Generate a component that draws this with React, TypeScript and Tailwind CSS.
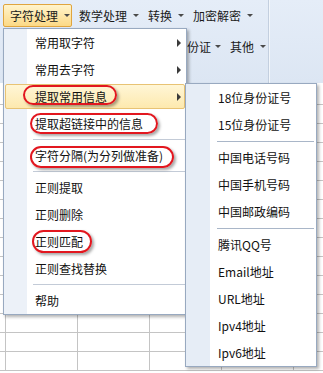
import React from 'react';

const font = "font-['Noto_Sans_CJK_SC',sans-serif]";

function DownArrow() {
  return <span className="w-0 h-0 border-x-[3px] border-x-transparent border-t-[3px] border-t-[#4a4a4a]" />;
}

function RightArrow() {
  return <span className="w-0 h-0 border-y-[4px] border-y-transparent border-l-[4px] border-l-[#3a3a3a]" />;
}

function Tab({ label, active, gap }: { label: string; active?: boolean; gap?: string }) {
  return (
    <div
      className={
        active
          ? 'h-[23px] shrink-0 whitespace-nowrap flex items-center gap-[6px] pl-[6px] pr-[1px] border border-[#e0a53e] rounded-[2px] bg-gradient-to-b from-[#fff4cc] to-[#fcd985]'
          : `h-[23px] shrink-0 whitespace-nowrap flex items-center ${gap ?? 'gap-[6px]'} pl-[7px] pr-[2px]`
      }
    >
      <span className="text-[12px] leading-none text-[#1a1a1a]">{label}</span>
      <DownArrow />
    </div>
  );
}

interface MenuItem {
  label?: string;
  arrow?: boolean;
  hot?: boolean;
  mark?: string;
  sep?: boolean;
}

const mainItems: MenuItem[] = [
  { label: '常用取字符', arrow: true },
  { label: '常用去字符', arrow: true },
  { label: '提取常用信息', arrow: true, hot: true, mark: 'left-[19px] top-[2px] w-[94px] h-[20px]' },
  { label: '提取超链接中的信息', mark: 'left-[26px] top-[3px] w-[128px] h-[21px]' },
  { sep: true },
  { label: '字符分隔(为分列做准备)', mark: 'left-[26px] top-[4px] w-[144px] h-[22px]' },
  { sep: true },
  { label: '正则提取' },
  { label: '正则删除' },
  { label: '正则匹配', mark: 'left-[28px] top-[2px] w-[60px] h-[23px]' },
  { label: '正则查找替换' },
  { sep: true },
  { label: '帮助' },
];

const subItems: MenuItem[] = [
  { label: '18位身份证号' },
  { label: '15位身份证号' },
  { sep: true },
  { label: '中国电话号码' },
  { label: '中国手机号码' },
  { label: '中国邮政编码' },
  { sep: true },
  { label: '腾讯QQ号' },
  { label: 'Email地址' },
  { label: 'URL地址' },
  { label: 'Ipv4地址' },
  { label: 'Ipv6地址' },
];

function GridRow() {
  return (
    <div className="h-[19px] flex shrink-0">
      <div className="w-[6px] border-r border-b border-[#c4c4c4]" />
      <div className="w-[72px] border-r border-b border-[#c4c4c4]" />
      <div className="w-[72px] border-r border-b border-[#c4c4c4]" />
      <div className="w-[72px] border-r border-b border-[#c4c4c4]" />
      <div className="w-[72px] border-r border-b border-[#c4c4c4]" />
      <div className="flex-1 border-b border-[#c4c4c4]" />
    </div>
  );
}

export default function App() {
  return (
    <div className={`relative w-[323px] h-[373px] overflow-hidden bg-white ${font}`}>
      {/* ribbon */}
      <div className="h-[83px] flex bg-gradient-to-b from-[#e5edf8] to-[#dce6f3]">
        <div className="w-[268px] shrink-0 flex flex-col">
          <div className="flex pt-[4px] pl-[3px]">
            <Tab label="字符处理" active />
            <Tab label="数学处理" />
            <Tab label="转换" />
            <Tab label="加密解密" />
          </div>
          <div className="flex items-center h-[23px] mt-[8px] pl-[168px]">
            <Tab label="身份证" gap="gap-[4px]" />
            <Tab label="其他" />
          </div>
        </div>
        <div className="w-[2px] shrink-0 border-l border-[#c3cfdf] bg-[#f2f6fb]" />
        <div className="flex-1" />
      </div>

      {/* sheet */}
      <div className="mt-[3px] flex flex-col">
        {Array.from({ length: 15 }).map((_, i) => (
          <GridRow key={i} />
        ))}
      </div>

      {/* main drop-down */}
      <div className="absolute left-[3px] top-[28px] w-[184px] border border-[#98a9c0] shadow-[2px_2px_3px_rgba(0,0,0,0.3)] bg-[linear-gradient(to_right,#ecf1f8_23px,#ffffff_23px)]">
        {mainItems.map((it, i) =>
          it.sep ? (
            <div key={i} className="h-[5px] flex items-center pl-[29px]">
              <div className="flex-1 h-px bg-[#c3cbd7]" />
            </div>
          ) : (
            <div key={i} className="relative h-[27px] flex items-center justify-between pl-[31px] pr-[5px]">
              {it.hot && (
                <div className="absolute inset-[1px] rounded-[2px] border border-[#e8c374] bg-gradient-to-b from-[#fff6d6] to-[#fde9ae]" />
              )}
              {it.mark && (
                <div
                  className={`absolute ${it.mark} rounded-full border-2 border-[#e2171f] shadow-[2px_2px_3px_rgba(0,0,0,0.35)]`}
                />
              )}
              <span className="relative text-[12px] leading-none text-[#111]">{it.label}</span>
              {it.arrow && (
                <span className="relative flex">
                  <RightArrow />
                </span>
              )}
            </div>
          )
        )}
      </div>

      {/* sub menu */}
      <div className="absolute left-[185px] top-[83px] w-[132px] border border-[#98a9c0] shadow-[2px_2px_3px_rgba(0,0,0,0.3)] bg-[linear-gradient(to_right,#e6edf6_24px,#ffffff_24px)]">
        {subItems.map((it, i) =>
          it.sep ? (
            <div key={i} className="h-[6px] flex items-center pl-[31px] pr-[2px]">
              <div className="flex-1 h-px bg-[#a9b6c8]" />
            </div>
          ) : (
            <div key={i} className="h-[27px] flex items-center pl-[32px]">
              <span className="text-[12px] leading-none text-[#111]">{it.label}</span>
            </div>
          )
        )}
      </div>
    </div>
  );
}
